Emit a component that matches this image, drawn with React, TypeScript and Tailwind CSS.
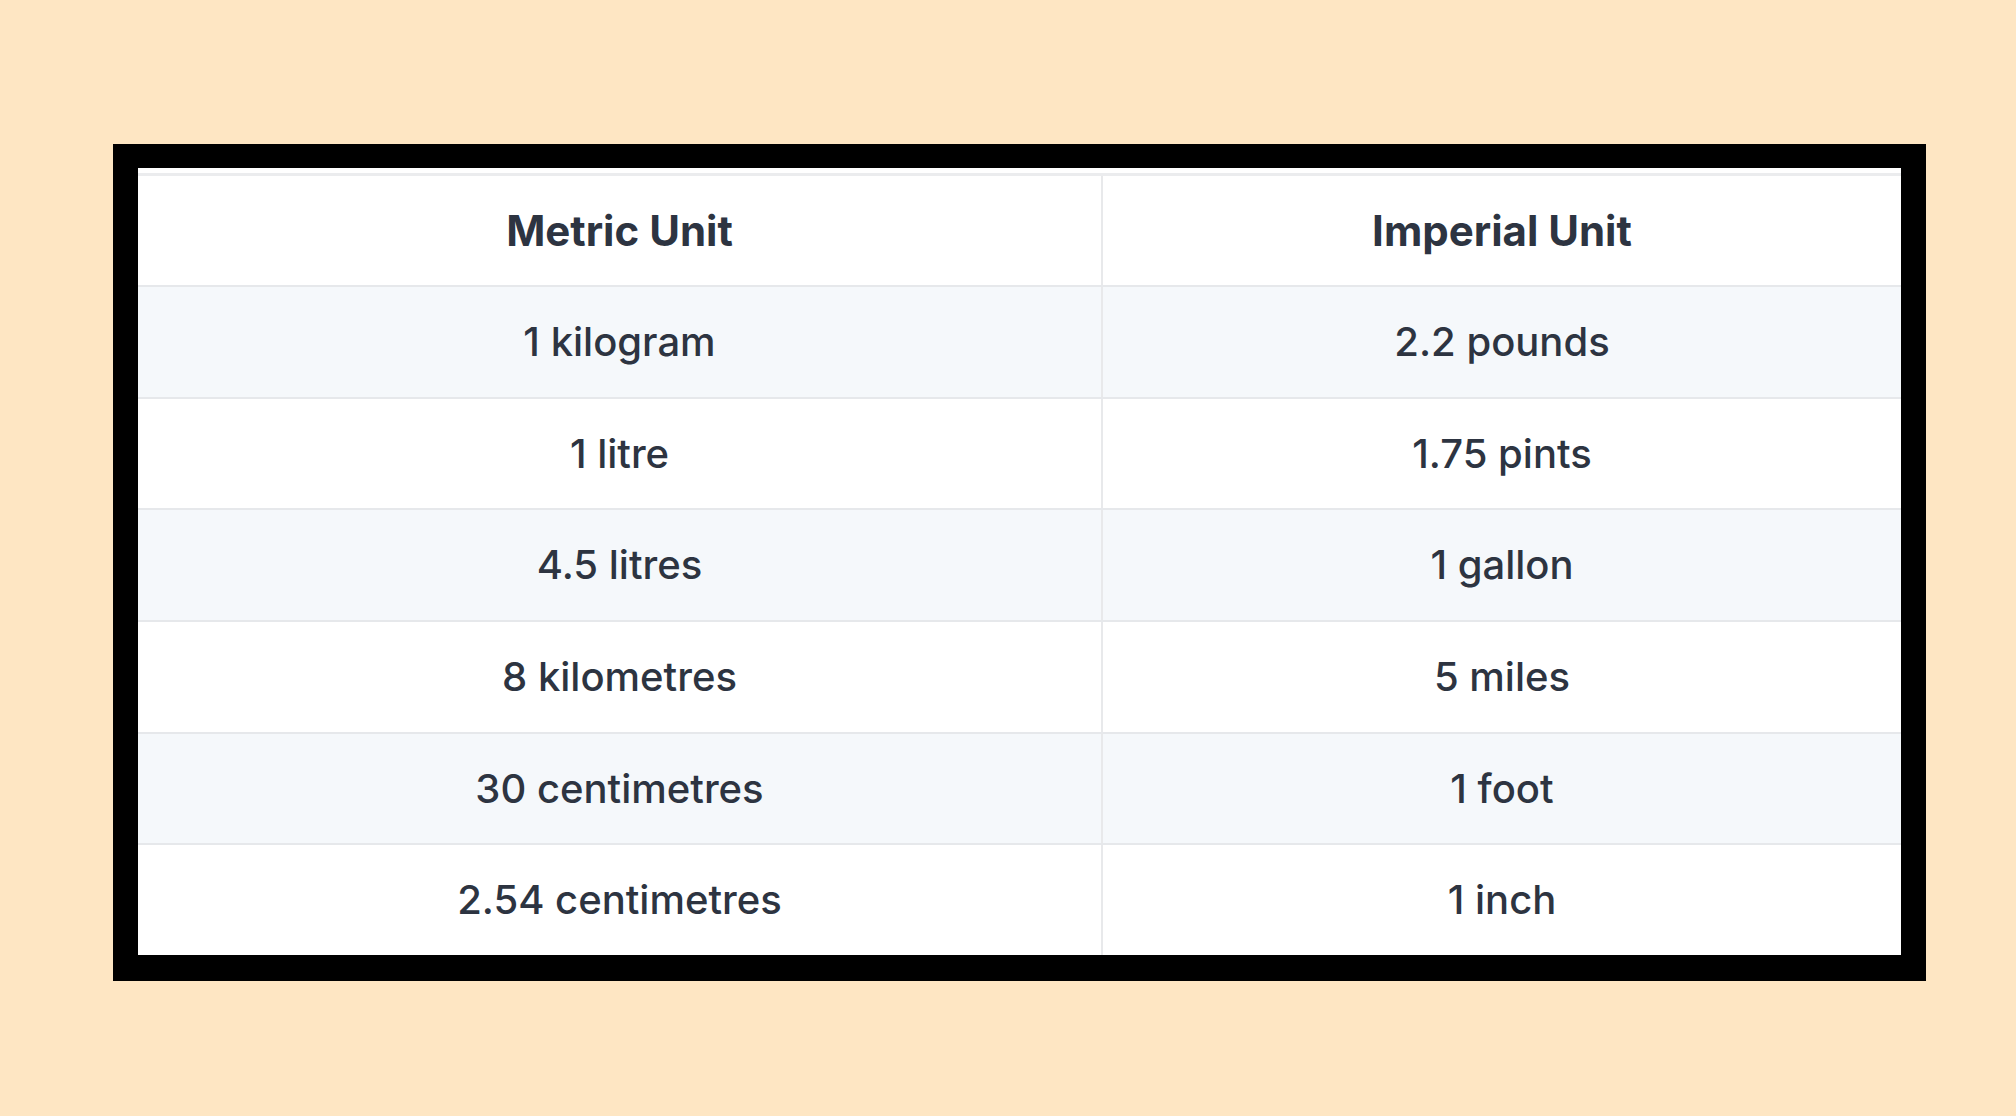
const ROWS = [
  ["1 kilogram", "2.2 pounds"],
  ["1 litre", "1.75 pints"],
  ["4.5 litres", "1 gallon"],
  ["8 kilometres", "5 miles"],
  ["30 centimetres", "1 foot"],
  ["2.54 centimetres", "1 inch"],
];

export default function App() {
  return (
    <div
      className="flex h-[1116px] w-[2016px] items-start bg-[#fee6c3] pl-[113px] pt-[144px] [font-variant-ligatures:none]"
      style={{ fontFamily: "Inter, 'Noto Sans', sans-serif" }}
    >
      <div className="w-[1813px] bg-black px-[25px] pb-[26px] pt-[24px]">
        <div className="flex h-[787px] flex-col bg-white pt-[5px] text-[#2d3441]">
          <div className="flex h-[114px] flex-none border-y-[3px] border-t-[#ebecee] border-b-[#e6e8eb] border-b-2">
            <div className="flex w-[965px] items-center justify-center border-r-2 border-[#e8e9eb] text-[42px] font-bold">
              Metric Unit
            </div>
            <div className="flex flex-1 items-center justify-center text-[42px] font-bold">Imperial Unit</div>
          </div>
          {ROWS.map(([metric, imperial], i) => (
            <div
              key={metric}
              className={
                "flex flex-1 " +
                (i % 2 === 0 ? "bg-[#f5f8fb] " : "bg-white ") +
                (i < ROWS.length - 1 ? "border-b-2 border-[#e6e8eb]" : "")
              }
            >
              <div className="flex w-[965px] items-center justify-center border-r-2 border-[#e8e9eb] text-[40px] font-medium">
                {metric}
              </div>
              <div className="flex flex-1 items-center justify-center text-[40px] font-medium">{imperial}</div>
            </div>
          ))}
        </div>
      </div>
    </div>
  );
}
